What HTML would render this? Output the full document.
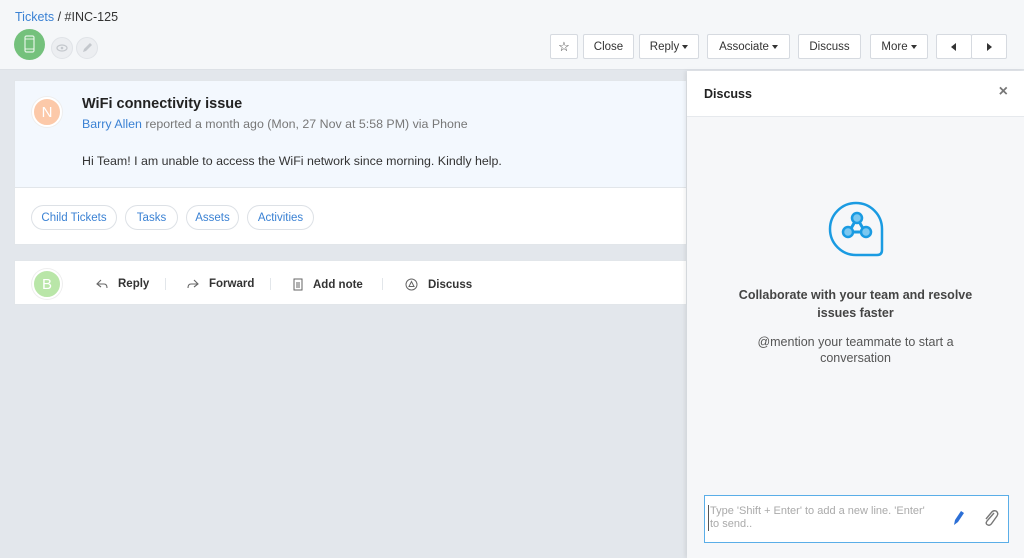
<!DOCTYPE html>
<html><head><meta charset="utf-8"><style>
*{box-sizing:border-box;margin:0;padding:0}
body{width:1024px;height:558px;overflow:hidden;background:#e3e7ec;font-family:"Liberation Sans",sans-serif;font-size:12px;color:#333;position:relative}
.top{position:absolute;left:0;top:0;width:1024px;height:70px;background:#f5f7f9;border-bottom:1px solid #dde1e6}
.bc{position:absolute;left:15px;top:10px;font-size:12.5px;color:#333}
.bc a{color:#3b82d4}
.circ{position:absolute;border-radius:50%}
.btn{position:absolute;top:34px;height:25px;background:#fff;border:1px solid #d6dae0;border-radius:2px;font-size:11.5px;color:#333;display:flex;align-items:center;justify-content:center}
.car{display:inline-block;border-left:3px solid transparent;border-right:3px solid transparent;border-top:4px solid #333;margin-left:3px;vertical-align:middle}
.card1{position:absolute;left:14px;top:80px;width:673px;height:165px;background:#fff;border:1px solid #e2e6ea}
.card1 .hd{height:107px;background:#f3f8fe;border-bottom:1px solid #e2e6ea}
.pill{position:absolute;top:205px;height:25px;border:1px solid #dde1e6;border-radius:13px;background:#fff;color:#3b82d4;font-size:11.5px;display:flex;align-items:center;justify-content:center}
.card2{position:absolute;left:14px;top:260px;width:673px;height:45px;background:#fff;border:1px solid #e2e6ea}
.act{position:absolute;top:278px;font-size:11.5px;font-weight:bold;color:#333;display:flex;align-items:center}
.act svg{margin-right:10px}
.sep{position:absolute;top:278px;width:1px;height:12px;background:#e2e6ea}
.panel{position:absolute;left:687px;top:71px;width:337px;height:487px;background:#f6f7f9;box-shadow:-2px 0 4px rgba(0,0,0,.08)}
.ph{height:46px;background:#fff;border-bottom:1px solid #e6e9ed}
</style></head><body>
<div class="top">
<div class="bc"><a>Tickets</a> / #INC-125</div>
<div class="circ" style="left:14px;top:29px;width:31px;height:31px;background:#74c17c"><svg width="31" height="31"><rect x="11" y="7" width="9" height="16" rx="1.5" fill="none" stroke="#fff" stroke-width="1.2" opacity=".8"/><line x1="11" y1="10" x2="20" y2="10" stroke="#fff" stroke-width="1" opacity=".8"/><line x1="11" y1="20" x2="20" y2="20" stroke="#fff" stroke-width="1" opacity=".8"/></svg></div>
<div class="circ" style="left:51px;top:37px;width:22px;height:22px;background:#eceef1;border:1px solid #e0e3e7"><svg width="20" height="20"><ellipse cx="10" cy="10" rx="5" ry="3" fill="none" stroke="#c4c8cd" stroke-width="1.2"/><circle cx="10" cy="10" r="1.3" fill="#c4c8cd"/></svg></div>
<div class="circ" style="left:76px;top:37px;width:22px;height:22px;background:#eceef1;border:1px solid #e0e3e7"><svg width="20" height="20"><path d="M6 14 L7 11 L13 5 L15 7 L9 13Z" fill="#c4c8cd"/></svg></div>
<div class="btn" style="left:550px;width:28px;font-size:13px">☆</div>
<div class="btn" style="left:583px;width:51px">Close</div>
<div class="btn" style="left:639px;width:60px">Reply<span class="car"></span></div>
<div class="btn" style="left:707px;width:83px">Associate<span class="car"></span></div>
<div class="btn" style="left:798px;width:63px">Discuss</div>
<div class="btn" style="left:870px;width:58px">More<span class="car"></span></div>
<div class="btn" style="left:936px;width:36px"><svg width="8" height="10"><path d="M6 1 L1 5 L6 9Z" fill="#333"/></svg></div>
<div class="btn" style="left:971px;width:36px"><svg width="8" height="10"><path d="M2 1 L7 5 L2 9Z" fill="#333"/></svg></div>
</div>
<div class="card1"><div class="hd"></div></div>
<div class="circ" style="left:32px;top:97px;width:30px;height:30px;background:#fcc9a9;border:2px solid #fff;box-shadow:0 0 0 1px #eee;color:#fff;font-size:15px;display:flex;align-items:center;justify-content:center">N</div>
<div style="position:absolute;left:82px;top:96px;font-size:14.5px;font-weight:bold;color:#222">WiFi connectivity issue</div>
<div style="position:absolute;left:82px;top:117px;font-size:12.4px;color:#777"><span style="color:#3b82d4">Barry Allen</span> reported a month ago (Mon, 27 Nov at 5:58 PM) via Phone</div>
<div style="position:absolute;left:82px;top:154px;font-size:12.4px;color:#333">Hi Team! I am unable to access the WiFi network since morning. Kindly help.</div>
<div class="pill" style="left:31px;width:86px">Child Tickets</div>
<div class="pill" style="left:125px;width:53px">Tasks</div>
<div class="pill" style="left:186px;width:53px">Assets</div>
<div class="pill" style="left:247px;width:67px">Activities</div>
<div class="card2"></div>
<div class="circ" style="left:32px;top:269px;width:30px;height:30px;background:#b9e6a8;border:2px solid #fff;box-shadow:0 0 0 1px #eee;color:#fff;font-size:15px;display:flex;align-items:center;justify-content:center">B</div>
<div class="act" style="left:96px"><svg width="12" height="12"><path d="M5 2 L1 6 L5 9 M1 6 H8 Q11 6 11 10" fill="none" stroke="#666" stroke-width="1.1"/></svg>Reply</div>
<div class="sep" style="left:165px"></div>
<div class="act" style="left:187px"><svg width="12" height="12"><path d="M7 2 L11 6 L7 9 M11 6 H4 Q1 6 1 10" fill="none" stroke="#666" stroke-width="1.1"/></svg>Forward</div>
<div class="sep" style="left:270px"></div>
<div class="act" style="left:293px"><svg width="10" height="13"><rect x="1" y="1" width="8" height="11" fill="none" stroke="#666"/><path d="M3 5H7M3 7H7M3 9H7" stroke="#666"/></svg>Add note</div>
<div class="sep" style="left:382px"></div>
<div class="act" style="left:405px"><svg width="13" height="13"><circle cx="6.5" cy="6.5" r="5.5" fill="none" stroke="#666"/><path d="M6.5 3.5 L4 8.5 H9Z" fill="none" stroke="#666"/></svg>Discuss</div>
<div class="panel">
<div class="ph"><div style="position:absolute;left:17px;top:16px;font-size:12.5px;font-weight:bold;color:#222">Discuss</div><div style="position:absolute;right:16px;top:12px;font-size:16px;color:#777;font-weight:bold">×</div></div>
<svg style="position:absolute;left:141px;top:130px" width="56" height="56"><path d="M28 2 A26 26 0 1 0 28 54 L49 54 Q54 54 54 49 L54 28 A26 26 0 0 0 28 2Z" fill="none" stroke="#1a9be2" stroke-width="2.5"/><path d="M29 17 L21 31 L37 31Z" fill="none" stroke="#1a9be2" stroke-width="3"/><circle cx="29" cy="17" r="5" fill="#7cc8f0" stroke="#1a9be2" stroke-width="2.5"/><circle cx="20" cy="31" r="5" fill="#7cc8f0" stroke="#1a9be2" stroke-width="2.5"/><circle cx="38" cy="31" r="5" fill="#7cc8f0" stroke="#1a9be2" stroke-width="2.5"/></svg>
<div style="position:absolute;left:0;width:337px;top:215px;text-align:center;font-size:12.5px;font-weight:bold;color:#444;line-height:18px">Collaborate with your team and resolve<br>issues faster</div>
<div style="position:absolute;left:0;width:337px;top:263px;text-align:center;font-size:12.5px;color:#555;line-height:16px">@mention your teammate to start a<br>conversation</div>
<div style="position:absolute;left:17px;top:424px;width:305px;height:48px;background:#fff;border:1px solid #5aaee8">
<div style="position:absolute;left:3px;top:9px;font-size:11px;color:#aaa;line-height:13px;border-left:1px solid #555;padding-left:1px">Type 'Shift + Enter' to add a new line. 'Enter'<br>to send..</div>
<svg style="position:absolute;left:245px;top:12px" width="16" height="20"><path d="M4 17 L5 12 L11 3 L14 5 L8 14Z" fill="#2c6fd6"/></svg>
<svg style="position:absolute;left:277px;top:12px" width="18" height="20"><path d="M12 5 L5 13 Q3 16 6 17 Q8 18 10 15 L15 8 Q17 5 14 3 Q11 2 9 5 L4 11" fill="none" stroke="#777" stroke-width="1.4"/></svg>
</div>
</div>
</body></html>
